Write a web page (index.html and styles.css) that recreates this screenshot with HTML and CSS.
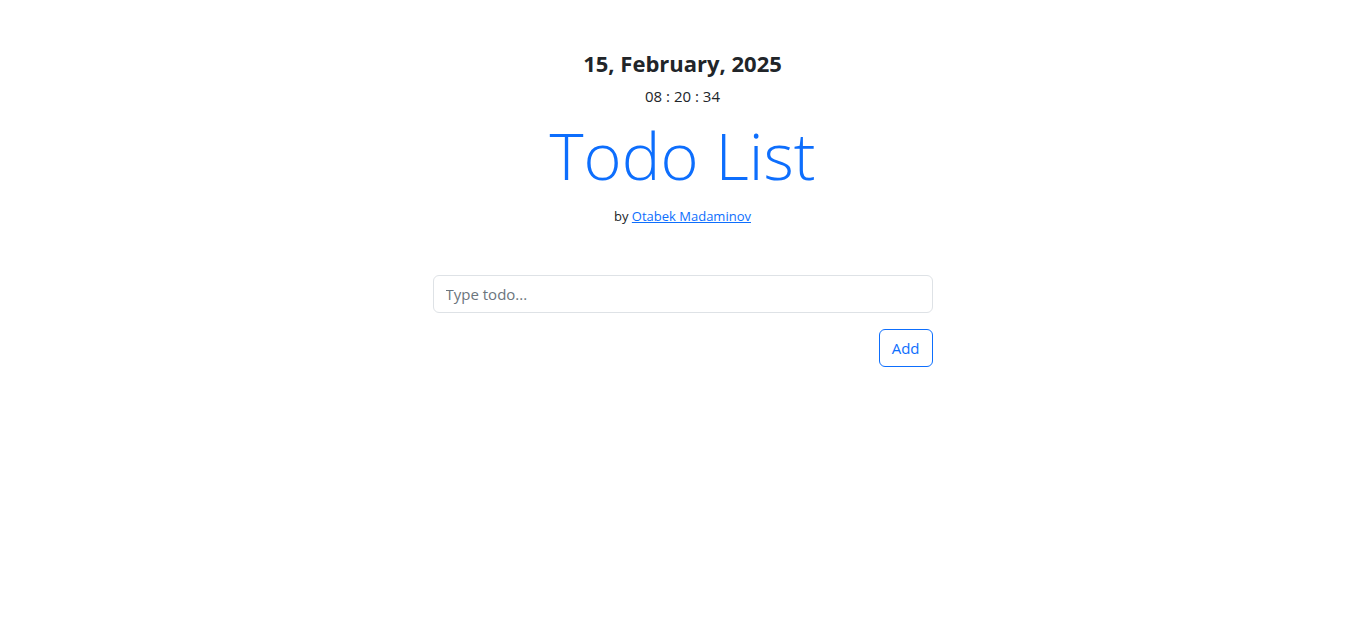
FILE: index.html
```html
<!DOCTYPE html>
<html lang="en">
<head>
<meta charset="utf-8">
<title>Todo List</title>
<link rel="stylesheet" href="styles.css">
</head>
<body>
<div class="container">
  <header class="header">
    <h4 class="date">15, February, 2025</h4>
    <p class="time">08 : 20 : 34</p>
    <h1 class="title">Todo List</h1>
    <p class="author">by <a href="#">Otabek Madaminov</a></p>
  </header>
  <form class="todo-form">
    <input class="form-control" type="text" placeholder="Type todo...">
    <div class="actions">
      <button class="btn-outline" type="button">Add</button>
    </div>
  </form>
</div>
</body>
</html>
```
FILE: styles.css
```css
* { box-sizing: border-box; }
html, body { margin: 0; padding: 0; background: #fff; }
body {
  font-family: "Open Sans", "Noto Sans", sans-serif;
  font-size: 16px;
  line-height: 1.5;
  color: #212529;
}
.container {
  width: 500px;
  margin: 0 auto;
  padding-top: 50px;
}
.header { text-align: center; }
.date {
  margin: 0 0 8px;
  font-size: 22px;
  font-weight: 700;
  line-height: 1.2;
}
.time {
  margin: 0;
  font-size: 15px;
  line-height: 24px;
}
.title {
  margin: 8px 0 0;
  font-size: 65px;
  font-weight: 300;
  line-height: 1.2;
  color: #0d6efd;
}
.author {
  margin: 12px 0 0;
  font-size: 13px;
  line-height: 21px;
}
.author a { color: #0d6efd; }
.todo-form { margin-top: 48px; }
.form-control {
  display: block;
  width: 100%;
  height: 38px;
  padding: 6px 12px;
  font-family: inherit;
  font-size: 15px;
  color: #212529;
  border: 1px solid #dee2e6;
  border-radius: 6px;
  outline: none;
}
.form-control::placeholder { color: #6c757d; opacity: 1; }
.actions {
  display: flex;
  justify-content: flex-end;
  margin-top: 16px;
}
.btn-outline {
  height: 38px;
  padding: 6px 12px;
  font-family: inherit;
  font-size: 15px;
  color: #0d6efd;
  background: transparent;
  border: 1px solid #0d6efd;
  border-radius: 6px;
  cursor: pointer;
}
```
